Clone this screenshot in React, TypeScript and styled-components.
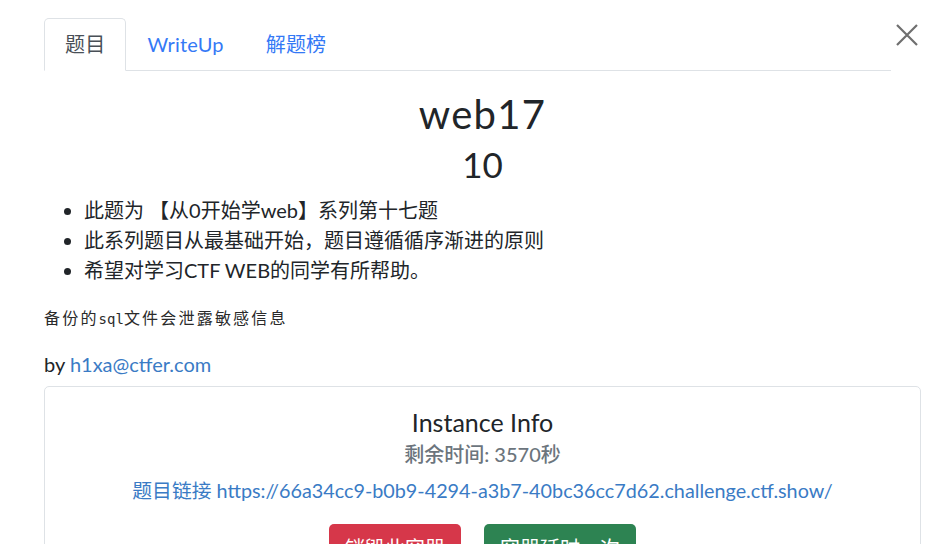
import React from "react";
import styled, { createGlobalStyle } from "styled-components";

const GlobalStyle = createGlobalStyle`
  body {
    margin: 0;
    background: #fff;
    font-family: Lato, "Noto Sans CJK SC", sans-serif;
    color: #212529;
  }
`;

const Modal = styled.div`
  padding: 18px 21px 0 44px;
  width: 942px;
  height: 544px;
  box-sizing: border-box;
  overflow: hidden;
`;

const Header = styled.div`
  display: flex;
  align-items: flex-start;
`;

const Tabs = styled.ul`
  flex: 1;
  display: flex;
  margin: 0;
  padding: 0;
  list-style: none;
  border-bottom: 1px solid #dee2e6;
`;

const Tab = styled.li<{ $active?: boolean }>`
  margin-bottom: -1px;
  padding: 11px 20px 12px;
  font-size: 20px;
  line-height: 28px;
  letter-spacing: 0.2px;
  border: 1px solid ${(p) => (p.$active ? "#dee2e6" : "transparent")};
  border-bottom-color: ${(p) => (p.$active ? "#fff" : "transparent")};
  border-radius: 5px 5px 0 0;
  color: ${(p) => (p.$active ? "#495057" : "#3479f6")};
  background: ${(p) => (p.$active ? "#fff" : "transparent")};
  cursor: pointer;
`;

const Close = styled.button`
  width: 30px;
  height: 30px;
  margin: 2px 0 0 0;
  padding: 0 0 0 2px;
  border: none;
  background: none;
  display: flex;
  align-items: center;
  justify-content: center;
  cursor: pointer;
`;

const Body = styled.div`
  padding-top: 19px;
`;

const Title = styled.h1`
  margin: 0;
  text-align: center;
  font-size: 40px;
  font-weight: 400;
  line-height: 48px;
  letter-spacing: 1.3px;
`;

const Score = styled.h2`
  margin: 4px 0 0;
  text-align: center;
  font-size: 35px;
  font-weight: 400;
  line-height: 44px;
`;

const List = styled.ul`
  margin: 9px 0 0;
  padding-left: 40px;
  font-size: 20px;
  line-height: 30px;
`;

const Desc = styled.p`
  margin: 20px 0 0;
  font-family: "Noto Sans CJK SC", sans-serif;
  font-size: 16px;
  line-height: 24px;
  letter-spacing: 2.2px;
  color: #2a2a2a;
`;

const Mono = styled.span`
  font-family: "DejaVu Sans Mono", monospace;
  font-size: 14px;
  letter-spacing: 0;
`;

const Author = styled.p`
  margin: 19px 0 0;
  font-size: 20px;
  line-height: 28px;
`;

const Link = styled.a`
  color: #3a7bc5;
  text-decoration: none;
`;

const Card = styled.div`
  margin-top: 8px;
  border: 1px solid #dee2e6;
  border-radius: 5px;
  padding: 19px 16px 20px;
  text-align: center;
`;

const CardTitle = styled.div`
  font-size: 25px;
  line-height: 32px;
`;

const Timer = styled.div`
  font-size: 20px;
  line-height: 32px;
  font-weight: 500;
  color: #6c757d;
`;

const UrlLine = styled.div`
  margin-top: 5px;
  font-size: 19.8px;
  line-height: 30px;
`;

const Actions = styled.div`
  display: flex;
  justify-content: center;
  gap: 23px;
  margin-top: 19px;
`;

const Button = styled.button<{ $tone: "danger" | "success" }>`
  padding: 9px 16px;
  border: none;
  border-radius: 5px;
  font-family: Lato, "Noto Sans CJK SC", sans-serif;
  font-size: 20px;
  line-height: 30px;
  color: #fff;
  background: ${(p) => (p.$tone === "danger" ? "#d6374a" : "#2d8352")};
  cursor: pointer;
`;

export default function App() {
  return (
    <>
      <GlobalStyle />
      <Modal>
        <Header>
          <Tabs>
            <Tab $active>题目</Tab>
            <Tab>WriteUp</Tab>
            <Tab>解题榜</Tab>
          </Tabs>
          <Close aria-label="close">
            <svg width="22" height="22" viewBox="0 0 22 22">
              <path d="M1 1 L21 21 M21 1 L1 21" stroke="#6f6f6f" strokeWidth="2.2" />
            </svg>
          </Close>
        </Header>
        <Body>
          <Title>web17</Title>
          <Score>10</Score>
          <List>
            <li>此题为 【从0开始学web】系列第十七题</li>
            <li>此系列题目从最基础开始，题目遵循循序渐进的原则</li>
            <li>希望对学习CTF WEB的同学有所帮助。</li>
          </List>
          <Desc>
            备份的<Mono>sql</Mono>文件会泄露敏感信息
          </Desc>
          <Author>
            by <Link href="#">h1xa@ctfer.com</Link>
          </Author>
          <Card>
            <CardTitle>Instance Info</CardTitle>
            <Timer>剩余时间: 3570秒</Timer>
            <UrlLine>
              <Link href="#">
                题目链接 https://66a34cc9-b0b9-4294-a3b7-40bc36cc7d62.challenge.ctf.show/
              </Link>
            </UrlLine>
            <Actions>
              <Button $tone="danger">销毁此容器</Button>
              <Button $tone="success">容器延时一次</Button>
            </Actions>
          </Card>
        </Body>
      </Modal>
    </>
  );
}
